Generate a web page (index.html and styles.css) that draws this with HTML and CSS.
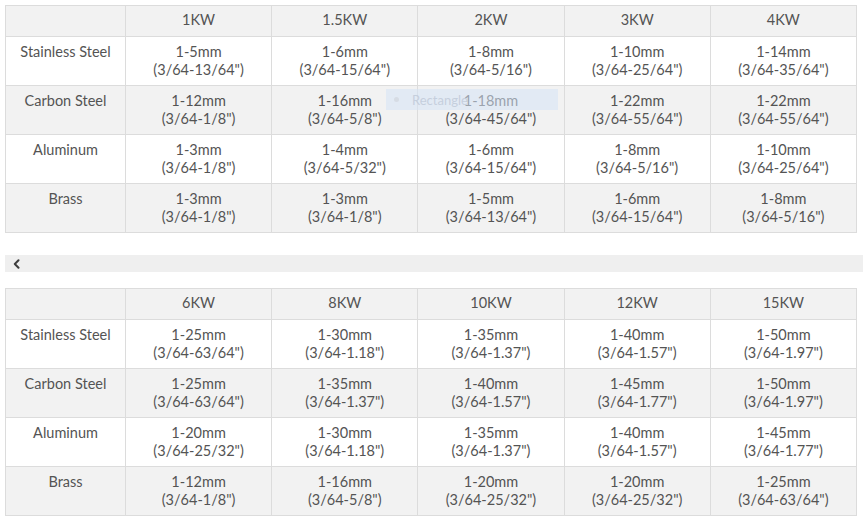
FILE: index.html
```html
<!DOCTYPE html>
<html lang="en">
<head>
<meta charset="utf-8">
<title>Cutting thickness</title>
<link rel="stylesheet" href="styles.css">
</head>
<body>
<div class="page">
  <table class="spec">
    <colgroup><col class="c-mat"><col><col><col><col><col></colgroup>
    <thead>
      <tr><th></th><th>1KW</th><th>1.5KW</th><th>2KW</th><th>3KW</th><th>4KW</th></tr>
    </thead>
    <tbody>
      <tr><td>Stainless Steel</td><td>1-5mm<br>(3/64-13/64")</td><td>1-6mm<br>(3/64-15/64")</td><td>1-8mm<br>(3/64-5/16")</td><td>1-10mm<br>(3/64-25/64")</td><td>1-14mm<br>(3/64-35/64")</td></tr>
      <tr><td>Carbon Steel</td><td>1-12mm<br>(3/64-1/8")</td><td>1-16mm<br>(3/64-5/8")</td><td>1-18mm<br>(3/64-45/64")</td><td>1-22mm<br>(3/64-55/64")</td><td>1-22mm<br>(3/64-55/64")</td></tr>
      <tr><td>Aluminum</td><td>1-3mm<br>(3/64-1/8")</td><td>1-4mm<br>(3/64-5/32")</td><td>1-6mm<br>(3/64-15/64")</td><td>1-8mm<br>(3/64-5/16")</td><td>1-10mm<br>(3/64-25/64")</td></tr>
      <tr><td>Brass</td><td>1-3mm<br>(3/64-1/8")</td><td>1-3mm<br>(3/64-1/8")</td><td>1-5mm<br>(3/64-13/64")</td><td>1-6mm<br>(3/64-15/64")</td><td>1-8mm<br>(3/64-5/16")</td></tr>
    </tbody>
  </table>

  <div class="scrollbar">
    <svg class="arrow" width="7" height="10" viewBox="0 0 7 10"><path d="M5.5 1.2 L1.8 5 L5.5 8.8" fill="none" stroke="#3e3e3e" stroke-width="2" stroke-linecap="round" stroke-linejoin="round"/></svg>
  </div>

  <table class="spec">
    <colgroup><col class="c-mat"><col><col><col><col><col></colgroup>
    <thead>
      <tr><th></th><th>6KW</th><th>8KW</th><th>10KW</th><th>12KW</th><th>15KW</th></tr>
    </thead>
    <tbody>
      <tr><td>Stainless Steel</td><td>1-25mm<br>(3/64-63/64")</td><td>1-30mm<br>(3/64-1.18")</td><td>1-35mm<br>(3/64-1.37")</td><td>1-40mm<br>(3/64-1.57")</td><td>1-50mm<br>(3/64-1.97")</td></tr>
      <tr><td>Carbon Steel</td><td>1-25mm<br>(3/64-63/64")</td><td>1-35mm<br>(3/64-1.37")</td><td>1-40mm<br>(3/64-1.57")</td><td>1-45mm<br>(3/64-1.77")</td><td>1-50mm<br>(3/64-1.97")</td></tr>
      <tr><td>Aluminum</td><td>1-20mm<br>(3/64-25/32")</td><td>1-30mm<br>(3/64-1.18")</td><td>1-35mm<br>(3/64-1.37")</td><td>1-40mm<br>(3/64-1.57")</td><td>1-45mm<br>(3/64-1.77")</td></tr>
      <tr><td>Brass</td><td>1-12mm<br>(3/64-1/8")</td><td>1-16mm<br>(3/64-5/8")</td><td>1-20mm<br>(3/64-25/32")</td><td>1-20mm<br>(3/64-25/32")</td><td>1-25mm<br>(3/64-63/64")</td></tr>
    </tbody>
  </table>

  <div class="ghost"><span class="ghost-dot"></span><span class="ghost-label">Rectangle</span></div>
</div>
</body>
</html>
```
FILE: styles.css
```css
* { box-sizing: border-box; }
html, body { margin: 0; padding: 0; background: #fff; }
body {
  font-family: "Lato", "Noto Sans", sans-serif;
  font-size: 14.5px;
  color: #545454;
}
.page {
  position: relative;
  padding: 5px 0 0 5px;
}
.spec {
  width: 852px;
  border-collapse: collapse;
  table-layout: fixed;
}
.c-mat { width: 120px; }
.spec th, .spec td {
  border: 1px solid #dcdcdc;
  text-align: center;
  vertical-align: top;
  font-weight: 400;
  line-height: 18px;
}
.spec th {
  background: #f2f2f2;
  padding: 5px 4px 7px;
  height: 31px;
}
.spec td {
  padding: 6px 4px 6px;
  height: 49px;
}
.spec tbody tr:nth-child(even) td { background: #f2f2f2; }
.scrollbar {
  margin: 22px 0 16px;
  height: 17px;
  background: #efefef;
  display: flex;
  align-items: center;
  padding-left: 8px;
}
.arrow { display: block; }
.ghost {
  position: absolute;
  left: 386px;
  top: 89px;
  width: 172px;
  height: 21px;
  background: rgba(214, 228, 246, 0.55);
  display: flex;
  align-items: center;
  padding-left: 8px;
  gap: 13px;
}
.ghost-dot {
  width: 5px;
  height: 5px;
  border-radius: 50%;
  background: #d6dce4;
}
.ghost-label {
  font-size: 13px;
  color: rgba(190, 200, 215, 0.8);
}
```
